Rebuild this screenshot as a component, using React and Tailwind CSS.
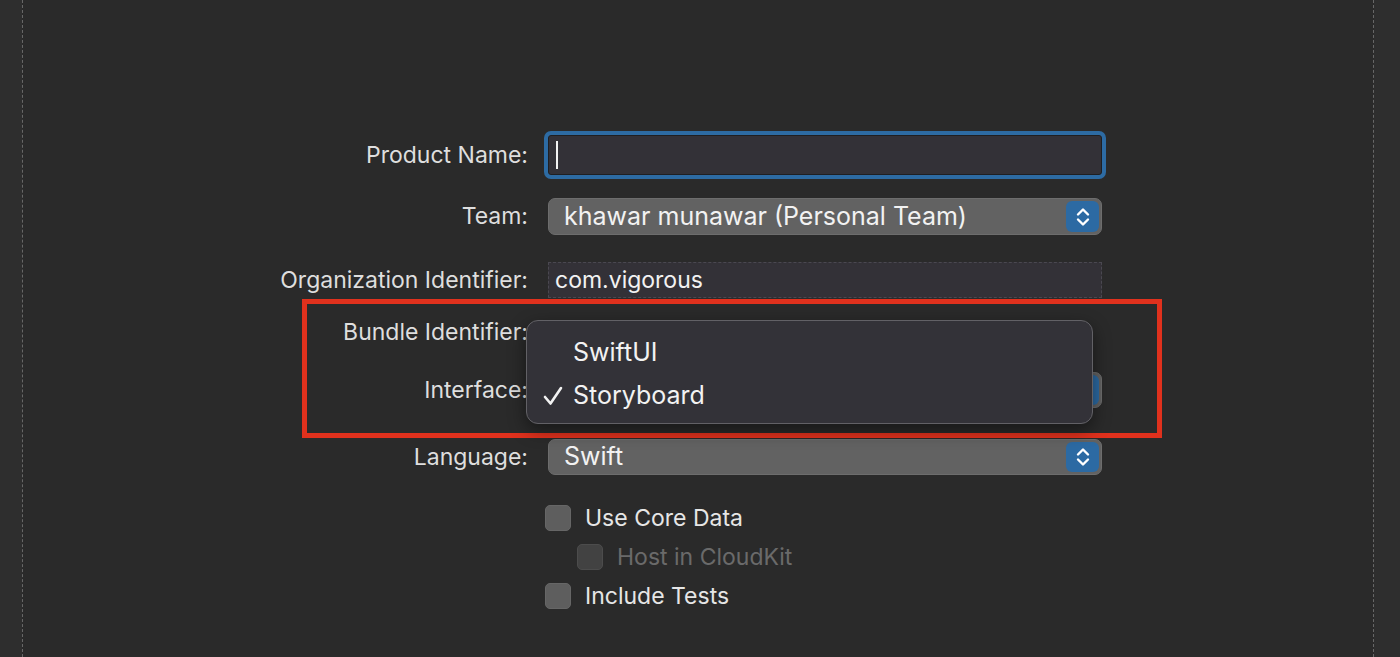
import React from "react";

function Stepper() {
  return (
    <div className="absolute right-[2px] top-[2px] bottom-[2px] w-[33px] rounded-[6px] bg-[#2c6aa3] flex items-center justify-center">
      <svg width="16" height="24" viewBox="0 0 16 24" fill="none" stroke="#ffffff" strokeWidth="2.4" strokeLinecap="round" strokeLinejoin="round">
        <path d="M3 9.5 L8 4.5 L13 9.5" />
        <path d="M3 14.5 L8 19.5 L13 14.5" />
      </svg>
    </div>
  );
}

function Select({ value }) {
  return (
    <div className="relative h-full w-full rounded-[7px] bg-[#626262] border border-[#6d6d6d] flex items-center pl-[15px] text-[25px] text-[#f2f2f2] whitespace-nowrap">
      {value}
      <Stepper />
    </div>
  );
}

function Row({ label, mt, h, children }) {
  return (
    <div className={`flex items-center ${mt} ${h}`}>
      <div className="w-[505px] text-right text-[#dedede] whitespace-nowrap">{label}</div>
      <div className="ml-[20px] w-[554px] h-full">{children}</div>
    </div>
  );
}

function Check({ label, dim, indent }) {
  return (
    <div className="flex items-center h-[26px]">
      <div className={indent ? "w-[554px]" : "w-[522px]"} />
      <div className={`w-[26px] h-[26px] rounded-[5px] ${dim ? "bg-[#424242] border border-[#4c4c4c]" : "bg-[#5e5e5e] border border-[#666666]"}`} />
      <div className={`ml-[14px] whitespace-nowrap ${dim ? "text-[#6a6a6a]" : "text-[#e6e6e6]"}`}>{label}</div>
    </div>
  );
}

export default function App() {
  return (
    <div className="w-[1400px] h-[657px] bg-[#2e2e2e] overflow-hidden font-['Inter','Liberation_Sans',sans-serif] text-[23px] antialiased">
      <div className="relative ml-[22px] w-[1352px] h-full border-x border-dashed border-[#676767] bg-[#2a2a2a]">
        <div className="flex flex-col pt-[135px]">
          <Row label="Product Name:" mt="mt-0" h="h-[40px]">
            <div className="h-full w-full rounded-[3px] bg-[#333137] ring-[4px] ring-[#2d6ba3] border border-[#1f1f22] flex items-center pl-[7px]">
              <div className="w-[2px] h-[28px] bg-[#f2f2f2]" />
            </div>
          </Row>
          <Row label="Team:" mt="mt-[23px]" h="h-[37px]">
            <Select value="khawar munawar (Personal Team)" />
          </Row>
          <Row label="Organization Identifier:" mt="mt-[27px]" h="h-[36px]">
            <div className="h-full w-full bg-[#333137] border border-dashed border-[#4a4850] flex items-center pl-[6px] text-[#f2f2f2]">
              com.vigorous
            </div>
          </Row>
          <Row label="Bundle Identifier:" mt="mt-[16px]" h="h-[37px]">
            <div />
          </Row>
          <Row label="Interface:" mt="mt-[21px]" h="h-[36px]">
            <Select value="" />
          </Row>
          <Row label="Language:" mt="mt-[31px]" h="h-[36px]">
            <Select value="Swift" />
          </Row>
          <div className="mt-[30px] flex flex-col gap-[13px]">
            <Check label="Use Core Data" />
            <Check label="Host in CloudKit" dim indent />
            <Check label="Include Tests" />
          </div>
        </div>

        {/* annotation box */}
        <div className="absolute left-[279px] top-[299px] w-[860px] h-[139px] border-[5px] border-[#e0311d]" />

        {/* popup menu */}
        <div className="absolute left-[503px] top-[320px] w-[567px] h-[104px] rounded-[12px] bg-[#333238] border border-[#626166] shadow-[0_6px_18px_rgba(0,0,0,0.45)] pt-[10px] text-[25px] text-[#f2f2f2]">
          <div className="h-[43px] flex items-center pl-[46px]">SwiftUI</div>
          <div className="h-[43px] flex items-center">
            <div className="w-[46px] pl-[16px] flex items-center">
              <svg width="20" height="20" viewBox="0 0 20 20" fill="none" stroke="#f2f2f2" strokeWidth="2.6" strokeLinecap="round" strokeLinejoin="round">
                <path d="M2 11 L7.5 17.5 L18 2" />
              </svg>
            </div>
            <span>Storyboard</span>
          </div>
        </div>
      </div>
    </div>
  );
}
